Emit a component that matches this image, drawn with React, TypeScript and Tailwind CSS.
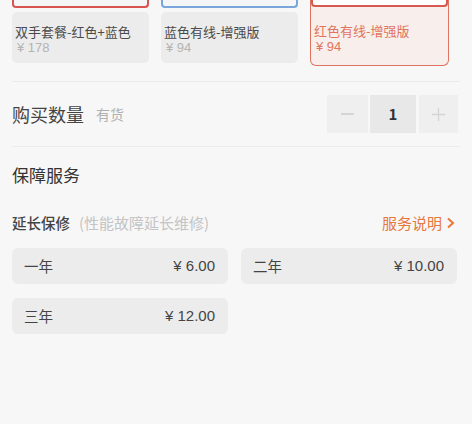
import React from "react";

const font = "font-['Noto_Sans_CJK_SC','Noto_Sans',sans-serif]";
const num = "font-['Liberation_Sans','Noto_Sans_CJK_SC',sans-serif]";

function Card({
  name,
  price,
  imgBorder,
  selected,
}: {
  name: string;
  price: string;
  imgBorder: string;
  selected?: boolean;
}) {
  if (selected) {
    return (
      <div className="w-[139px] h-[66px] border border-t-0 border-[#e0735f] rounded-b-[6px] bg-[#f8efed] flex flex-col">
        <div className="h-[7px] border-x-2 border-b-2 border-[#d65a50] rounded-b-[4px] bg-white" />
        <div className="pl-[3px] pt-[17px] flex flex-col">
          <div className="text-[13px] leading-[13px] text-[#e2735c] whitespace-nowrap">{name}</div>
          <div className={`mt-[3px] text-[13px] leading-[13px] text-[#e2735c] pl-[2px] ${num}`}>¥ {price}</div>
        </div>
      </div>
    );
  }
  return (
    <div className="w-[137px] flex flex-col">
      <div className={`h-[8px] border-x-2 border-b-2 ${imgBorder} rounded-b-[4px] bg-[#f4f6f8]`} />
      <div className="mt-[4px] h-[51px] bg-[#ececec] rounded-[5px] pl-[3px] pt-[13px] flex flex-col">
        <div className="text-[13px] leading-[13px] text-[#4a4a4a] whitespace-nowrap">{name}</div>
        <div className={`mt-[3px] text-[13px] leading-[13px] text-[#b4b4b4] pl-[2px] ${num}`}>¥ {price}</div>
      </div>
    </div>
  );
}

function Option({ label, price }: { label: string; price: string }) {
  return (
    <div className="h-[36px] bg-[#ececec] rounded-[6px] flex items-center justify-between pl-[12px] pr-[13px] text-[#444]">
      <span className="text-[14.5px]">{label}</span>
      <span className={`text-[15px] ${num}`}>¥ {price}</span>
    </div>
  );
}

export default function App() {
  return (
    <div className={`w-[472px] h-[424px] bg-[#f7f7f7] overflow-hidden ${font}`}>
      <div className="flex gap-3 px-3 items-start">
        <Card name="双手套餐-红色+蓝色" price="178" imgBorder="border-[#d9534f]" />
        <Card name="蓝色有线-增强版" price="94" imgBorder="border-[#7aa6dc]" />
        <Card name="红色有线-增强版" price="94" imgBorder="border-[#d65a50]" selected />
      </div>

      <div className="mx-3 mt-[15px] border-t border-[#ebebeb]" />

      <div className="mx-3 h-[64px] flex items-center justify-between">
        <div className="flex items-center">
          <span className="text-[18px] text-[#444]">购买数量</span>
          <span className="ml-[12px] text-[14px] text-[#b0b0b0]">有货</span>
        </div>
        <div className="flex h-[38px] mr-[2px]">
          <div className="w-[41px] bg-[#efefef] flex items-center justify-center">
            <div className="w-[13px] h-[1.5px] bg-[#d4d4d4]" />
          </div>
          <div className="ml-[2px] w-[46px] bg-[#e8e8e8] flex items-center justify-center text-[15px] font-semibold text-[#333]">1</div>
          <div className="ml-[3px] w-[39px] bg-[#efefef] flex items-center justify-center">
            <svg width="13" height="13" viewBox="0 0 13 13">
              <path d="M6.5 0 V13 M0 6.5 H13" stroke="#d4d4d4" strokeWidth="1.3" />
            </svg>
          </div>
        </div>
      </div>

      <div className="mx-3 border-t border-[#ebebeb]" />

      <div className="mx-3 mt-[16px] text-[17px] text-[#333] leading-[24px]">保障服务</div>

      <div className="mx-3 mt-[26px] flex items-center justify-between leading-[20px]">
        <div className="flex items-center">
          <span className="text-[14.5px] font-medium text-[#444]">延长保修</span>
          <span className="ml-[9px] text-[15px] text-[#c4c4c4]">(性能故障延长维修)</span>
        </div>
        <div className="flex items-center text-[15px] text-[#e8773d] mr-[4px]">
          <span>服务说明</span>
          <svg width="10" height="12" viewBox="0 0 10 12" className="ml-[4px]">
            <path d="M2 1.5 L7 6 L2 10.5" fill="none" stroke="#e8773d" strokeWidth="2" />
          </svg>
        </div>
      </div>

      <div className="ml-3 w-[445px] mt-[15px] grid grid-cols-2 gap-x-[13px] gap-y-[14px]">
        <Option label="一年" price="6.00" />
        <Option label="二年" price="10.00" />
        <Option label="三年" price="12.00" />
      </div>
    </div>
  );
}
